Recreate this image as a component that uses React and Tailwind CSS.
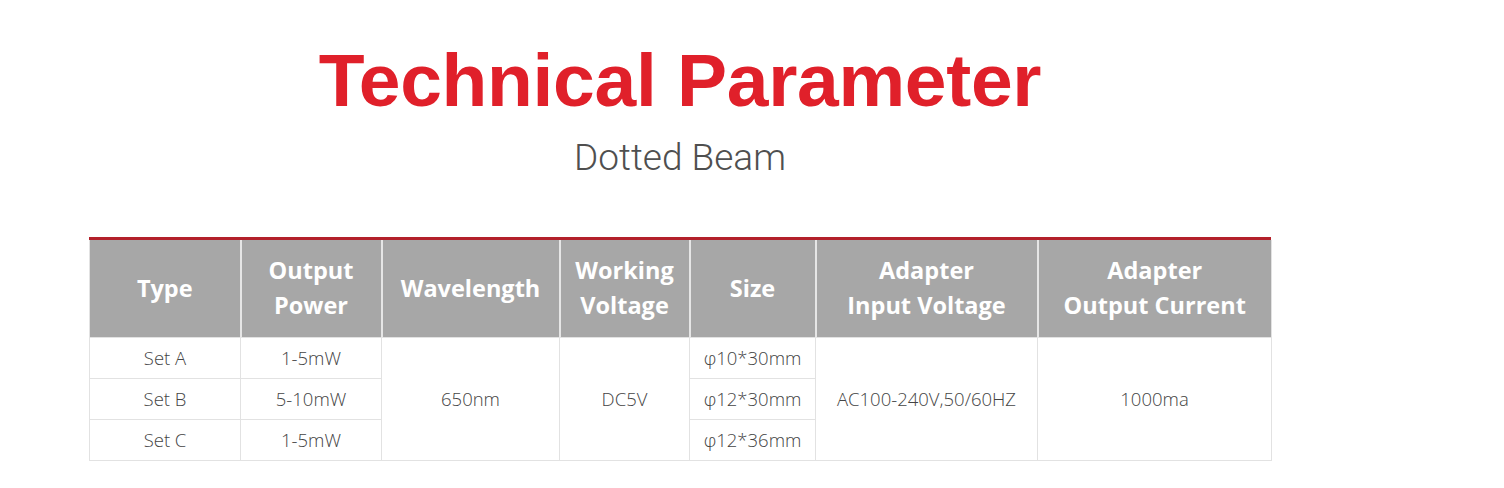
import React from 'react';

const rows = [
  { type: 'Set A', power: '1-5mW', size: 'φ10*30mm' },
  { type: 'Set B', power: '5-10mW', size: 'φ12*30mm' },
  { type: 'Set C', power: '1-5mW', size: 'φ12*36mm' },
];

const headers = [
  { label: ['Type'], w: 'w-[151px]' },
  { label: ['Output', 'Power'], w: 'w-[141px]' },
  { label: ['Wavelength'], w: 'w-[178px]' },
  { label: ['Working', 'Voltage'], w: 'w-[130px]' },
  { label: ['Size'], w: 'w-[126px]' },
  { label: ['Adapter', 'Input Voltage'], w: 'w-[222px]' },
  { label: ['Adapter', 'Output Current'], w: 'w-[234px]' },
];

export default function App() {
  const cell = 'border border-[#e2e2e2] text-center h-[41px] p-0';
  return (
    <div className="w-[1504px] h-[488px] bg-white overflow-hidden">
      <div className="ml-[89px] w-[1182px] pt-[38px]">
        <h1 className="text-center text-[#e0202a] font-bold text-[75px] leading-[84px] tracking-[-0.3px] [font-family:'Liberation_Sans',Arial,sans-serif]">
          Technical Parameter
        </h1>
        <p className="text-center text-[#4f4f4f] font-light text-[37px] leading-[44px] mt-[14px] [font-family:Roboto,'Liberation_Sans',sans-serif]">
          Dotted Beam
        </p>

        <div className="mt-[57px] border-t-[3px] border-[#b3202a]">
          <table className="w-full border-collapse table-fixed [font-family:'Open_Sans',sans-serif]">
            <thead>
              <tr className="bg-[#a7a7a7] text-white">
                {headers.map((h, i) => (
                  <th
                    key={i}
                    className={`${h.w} h-[97px] p-0 border-x-2 border-x-[#e6e6e6] border-t-0 first:border-l-[#e2e2e2] first:border-l last:border-r last:border-r-[#e2e2e2] text-[23.5px] font-bold leading-[35px]`}
                  >
                    {h.label.map((l, j) => (
                      <div key={j}>{l}</div>
                    ))}
                  </th>
                ))}
              </tr>
            </thead>
            <tbody className="text-[#444] text-[18.5px] font-light">
              {rows.map((r, i) => (
                <tr key={i}>
                  <td className={cell}>{r.type}</td>
                  <td className={cell}>{r.power}</td>
                  {i === 0 && (
                    <>
                      <td rowSpan={3} className={cell}>650nm</td>
                      <td rowSpan={3} className={cell}>DC5V</td>
                    </>
                  )}
                  <td className={cell}>{r.size}</td>
                  {i === 0 && (
                    <>
                      <td rowSpan={3} className={cell}>AC100-240V,50/60HZ</td>
                      <td rowSpan={3} className={cell}>1000ma</td>
                    </>
                  )}
                </tr>
              ))}
            </tbody>
          </table>
        </div>
      </div>
    </div>
  );
}
